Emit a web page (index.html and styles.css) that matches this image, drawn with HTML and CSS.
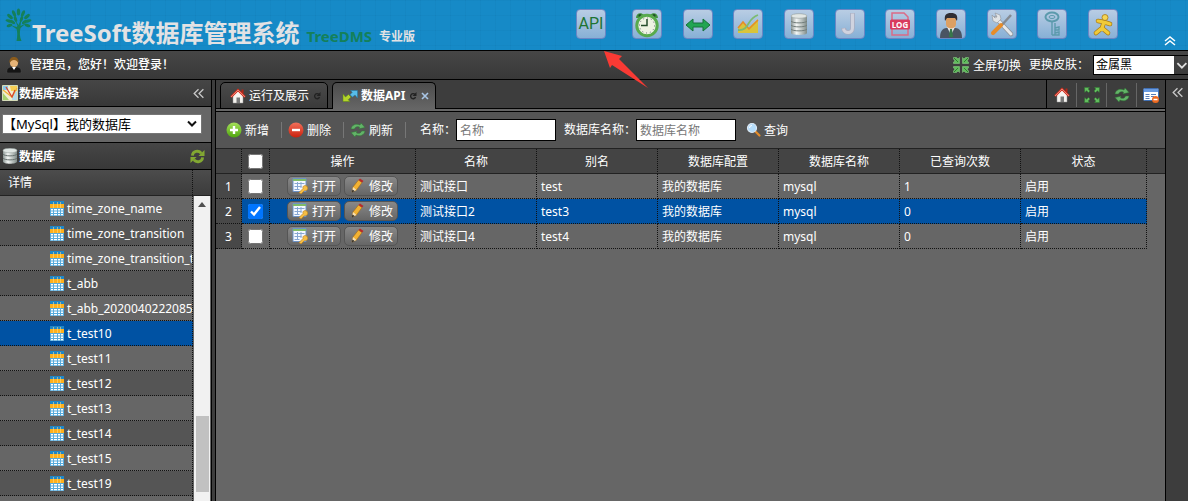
FILE: index.html
```html
<!DOCTYPE html>
<html lang="zh-CN">
<head>
<meta charset="utf-8">
<title>TreeSoft数据库管理系统</title>
<link rel="stylesheet" href="styles.css">
</head>
<body>
<svg class="defs" aria-hidden="true">
  <defs>
    <linearGradient id="metal"><stop offset="0" stop-color="#8b9694"/><stop offset=".35" stop-color="#f4f7f6"/><stop offset="1" stop-color="#7f8b88"/></linearGradient>
    <linearGradient id="green" x2="0" y2="1"><stop offset="0" stop-color="#a6e05a"/><stop offset="1" stop-color="#4fa50e"/></linearGradient>
    <linearGradient id="red" x2="0" y2="1"><stop offset="0" stop-color="#f2705a"/><stop offset="1" stop-color="#c9200d"/></linearGradient>
  </defs>
  <symbol id="i-tree" viewBox="0 0 26 34"><path fill="#14805a" d="M11 33c1-5 1-9 0-12L5 17l6 2 1-1-3-7 4 6 3-7-1 8 6-3-6 5c-1 4-1 9 1 13z"/><g fill="#14805a"><ellipse cx="13" cy="4" rx="1.7" ry="3.6"/><ellipse cx="8.500" cy="5.500" rx="1.600" ry="3.500" transform="rotate(-22 8.500 5.500)"/><ellipse cx="17.500" cy="5.500" rx="1.600" ry="3.500" transform="rotate(22 17.500 5.500)"/><ellipse cx="4.500" cy="8.500" rx="1.600" ry="3.500" transform="rotate(-48 4.500 8.500)"/><ellipse cx="21.500" cy="8.500" rx="1.600" ry="3.500" transform="rotate(48 21.500 8.500)"/><ellipse cx="3.500" cy="13" rx="1.500" ry="3.500" transform="rotate(-75 3.500 13)"/><ellipse cx="22.500" cy="13" rx="1.500" ry="3.500" transform="rotate(75 22.500 13)"/><ellipse cx="4" cy="17.500" rx="1.500" ry="3" transform="rotate(-105 4 17.500)"/><ellipse cx="22" cy="17.500" rx="1.500" ry="3" transform="rotate(105 22 17.500)"/><ellipse cx="10" cy="11" rx="1.500" ry="3" transform="rotate(-20 10 11)"/><ellipse cx="16" cy="11" rx="1.500" ry="3" transform="rotate(20 16 11)"/><ellipse cx="7" cy="14" rx="1.400" ry="3" transform="rotate(-55 7 14)"/><ellipse cx="19" cy="14" rx="1.400" ry="3" transform="rotate(55 19 14)"/></g></symbol>
  <symbol id="i-user" viewBox="0 0 16 16"><path d="M1 16c-1-5 2-6 5-6h4c3 0 6 1 5 6z" fill="#151515" stroke="#555" stroke-width=".5"/><path d="M6 10l2 3 2-3z" fill="#fff"/><circle cx="8" cy="6" r="4" fill="#e5b377"/><path d="M3.500 6C3 1 6 0 8 0s5 1 4.500 6C11 4 10 3 8 3S5 4 3.500 6" fill="#8a5b1c"/></symbol>
  <symbol id="i-arrows" viewBox="0 0 16 16"><g fill="#62bd5e" stroke="#2f7a30" stroke-width=".5"><path id="ar" d="M.5.5h5L4.200 2 6 4 4.500 5.500 2.500 3.800.8 5.400z"/><use href="#ar" transform="matrix(-1 0 0 1 16 0)"/><use href="#ar" transform="matrix(1 0 0 -1 0 16)"/><use href="#ar" transform="matrix(-1 0 0 -1 16 16)"/></g></symbol>
  <symbol id="i-compress" viewBox="0 0 16 16"><g fill="#62bd5e" stroke="#8fd08a" stroke-width=".5"><path id="ac" d="M6.500 6.500h-6V5L2 4 .5 2V.5h3L5 2l1.500-1.500z"/><use href="#ac" transform="matrix(-1 0 0 1 16 0)"/><use href="#ac" transform="matrix(1 0 0 -1 0 16)"/><use href="#ac" transform="matrix(-1 0 0 -1 16 16)"/></g><path d="M1 1l4 4M15 1l-4 4M1 15l4-4M15 15l-4-4" stroke="#2f7a30"/></symbol>
  <symbol id="i-home" viewBox="0 0 16 16"><path d="M11.500 1.500h2v4h-2z" fill="#b02418"/><path d="M3 8l5-5 5 5v7H3z" fill="#f5f3ef" stroke="#999" stroke-width=".5"/><path d="M6.500 9.500h3.500V15H6.500z" fill="#777"/><path d="M1 9l7-7 7 7" fill="none" stroke="#d8301e" stroke-width="2.200"/><path d="M1 9l7-7 7 7" fill="none" stroke="#fff" stroke-width=".4"/></symbol>
  <symbol id="i-refresh" viewBox="0 0 16 16"><g fill="#63b368" stroke="#2c7432" stroke-width=".5"><path d="M1 7c.5-4 5-6 9-4l1-2 4 4.500-6 1.300.5-1.700C7 4 5 5 4.500 7z"/><path d="M15 9c-.5 4-5 6-9 4l-1 2-4-4.500 6-1.300-.5 1.700C9 12 11 11 11.500 9z"/></g></symbol>
  <symbol id="i-sync" viewBox="0 0 16 16"><g fill="none" stroke="#82a832" stroke-width="3"><path d="M2.500 7C3 2 9 1 12 4.500M13.500 9c-.5 5-6.500 6-9.500 2.500"/></g><path d="M15.500 1v6.500H9zM.5 15V8.500H7z" fill="#82a832"/></symbol>
  <symbol id="i-window" viewBox="0 0 16 16"><rect x=".5" y="1.500" width="15" height="12" rx="1" fill="#fff" stroke="#3f6fb4"/><path d="M1 2h14v3H1z" fill="#6a9be0"/><path d="M2.500 7.500h4M2.500 9.500h4M2.500 11.500h4M8 7.500h5M8 9.500h3" stroke="#5a7eb8"/><circle cx="12.500" cy="12.500" r="3.500" fill="#ef6a20"/><path d="M10.500 12.500h4" stroke="#fff" stroke-width="1.500"/></symbol>
  <symbol id="i-map" viewBox="0 0 16 16"><path d="M.5.5h15v15H.5z" fill="#f1edcf" stroke="#d5dcb8"/><path d="M1 1h5v4H1z" fill="#8ac7e9"/><path d="M8 1h7v5H9z" fill="#f6cf55"/><path d="M1 8l6 7H1z" fill="#a6d06b"/><path d="M10 9l5-3v9h-5z" fill="#b5d8e8"/><path d="M1 5l9 7 5-9" fill="none" stroke="#f2b334" stroke-width="1.200"/><path d="M4 2l6 10 3-7" fill="none" stroke="#d9402a" stroke-width="1.200"/></symbol>
  <symbol id="i-db" viewBox="0 0 14 16"><path d="M0 2.500v11c0 3 14 3 14 0v-11z" fill="url(#metal)"/><ellipse cx="7" cy="2.500" rx="7" ry="2.300" fill="#dfe6e4" stroke="#909b98" stroke-width=".5"/><path d="M0 6c1 2.500 13 2.500 14 0M0 10c1 2.500 13 2.500 14 0" fill="none" stroke="#66716f"/></symbol>
  <symbol id="i-table" viewBox="0 0 14 15"><path d="M0 0h14v15H0z" fill="#58abdc"/><path d="M0 0h14v3H0z" fill="#1e86c8"/><path d="M0 3h14v4H0z" fill="#ffb01c"/><path d="M1 8h2v1.500H1zm3 0h3v1.500H4zm4 0h2v1.500H8zm3 0h2v1.500h-2zM1 10.500h2V12H1zm3 0h3V12H4zm4 0h2V12H8zm3 0h2V12h-2zM1 13h2v1.200H1zm3 0h3v1.200H4zm4 0h2v1.200H8zm3 0h2v1.200h-2z" fill="#fff"/><path d="M3.500 1v6M7.500 1v6M10.500 1v6" stroke="#ffdf87" stroke-width=".6"/></symbol>
  <symbol id="i-link" viewBox="0 0 16 12"><path d="M1 4v7.500h7L6.200 9.700 9 7 6.500 4.500 3.500 7z" fill="#b4d42a" stroke="#5f8a13" stroke-width=".5"/><path d="M15.500 8V.5h-7l1.800 1.800L8 4.800 10.500 7 13 5z" fill="#58bce8" stroke="#1c78a8" stroke-width=".5"/></symbol>
  <symbol id="i-add" viewBox="0 0 16 16"><circle cx="8" cy="8" r="7.500" fill="url(#green)"/><path d="M8 4v8M4 8h8" stroke="#fff" stroke-width="2.400"/></symbol>
  <symbol id="i-remove" viewBox="0 0 16 16"><circle cx="8" cy="8" r="7.500" fill="url(#red)"/><path d="M4 8h8" stroke="#fff" stroke-width="2.400"/></symbol>
  <symbol id="i-search" viewBox="0 0 16 16"><path d="M9 9l4.500 4.500" stroke="#e38b2a" stroke-width="2.200" stroke-linecap="round"/><circle cx="6" cy="6" r="4.500" fill="#b4dcfa" stroke="#dce9f5" stroke-width="1.200"/><path d="M3.500 6A2.500 2.500 0 0 1 6 3.500" stroke="#fff" fill="none"/></symbol>
  <symbol id="i-open" viewBox="0 0 16 16"><path d="M1 .5h13v13H1z" fill="#f4f8ff" stroke="#6d92c6"/><path d="M1 1h13v2H1z" fill="#7fbb68"/><path d="M2.500 5.500h10M2.500 8.500h7M2.500 11.500h5M5.500 4v8M9 4v6" stroke="#86a6d3"/><path d="M7 14.500l4-4c-1-3 3-4 4.500-1.500 1 2.500-1 4-3 3.500L9 16z" fill="#f5bd45" stroke="#b77b17" stroke-width=".6"/></symbol>
  <symbol id="i-edit" viewBox="0 0 16 16"><path d="M3 14l1-5 5.500-7 3.500 2.500L7.500 12z" fill="#f2b233" stroke="#a66b12" stroke-width=".6"/><path d="M9.500 2L11 .4l3.500 2.500L13 4.500z" fill="#b82a2a"/><path d="M3 14l1-5 3.500 3z" fill="#f5dfb5"/><path d="M3 14.500l.4-3L5.500 13z" fill="#222"/></symbol>
</svg>

<header class="banner">
  <div class="brand">
    <svg class="tree"><use href="#i-tree"/></svg>
    <h1 class="title">TreeSoft数据库管理系统</h1>
    <span class="product">TreeDMS</span>
    <span class="edition">专业版</span>
  </div>
  <nav class="apps">
    <button class="app api" type="button">API<svg class="pointer" viewBox="0 0 44 38" aria-hidden="true"><path d="M0 0l18 5-3 3 29 29-36-23-2 3z" fill="#f93a34"/></svg></button>
    <div class="app-list">
      <button class="app" type="button" aria-label="定时任务"><svg viewBox="0 0 28 28"><path d="M3 8c0-5 5-6 8-3h6c3-3 8-2 8 3" fill="#3f9440"/><circle cx="7" cy="5.500" r="1.500" fill="#234d26"/><circle cx="21" cy="5.500" r="1.500" fill="#234d26"/><circle cx="14" cy="15.500" r="10.200" fill="#edf3e2" stroke="#58aa4d" stroke-width="3"/><circle cx="14" cy="15.500" r="7.500" fill="none" stroke="#667" stroke-dasharray="1 2.900"/><path d="M14 9v6.500H8" fill="none" stroke="#234b2a" stroke-width="1.500"/></svg></button>
      <button class="app" type="button" aria-label="数据同步"><svg viewBox="0 0 28 28"><path d="M2 15l7-6v4h10V9l7 6-7 6v-4H9v4z" fill="#22a552" stroke="#16733c"/></svg></button>
      <button class="app" type="button" aria-label="统计图表"><svg viewBox="0 0 28 28"><path d="M4 23v-4l5-7 5 6 10-9v14z" fill="#d9c43a"/><path d="M4 18l5-6 6 7 9-9" fill="none" stroke="#e58c28" stroke-width="1.500"/><path d="M4 20c12 1 8-11 20-15" fill="none" stroke="#7dbb70" stroke-width="1.800"/></svg></button>
      <button class="app" type="button" aria-label="数据源"><svg viewBox="0 0 28 28"><path d="M6 6v17c0 2.500 16 2.500 16 0V6z" fill="url(#metal)"/><ellipse cx="14" cy="6" rx="8" ry="2.300" fill="#e2e7e4" stroke="#909b98" stroke-width=".6"/><path d="M6 11c1 2.500 15 2.500 16 0M6 15c1 2.500 15 2.500 16 0M6 19c1 2.500 15 2.500 16 0" fill="none" stroke="#737e7c"/></svg></button>
      <button class="app" type="button" aria-label="JSON"><svg viewBox="0 0 28 28"><path d="M16.500 3v15c0 6-8.500 6-9 0" fill="none" stroke="#a9adc0" stroke-width="4.500"/><path d="M16.500 3.500V18c0 6-8.500 6-9 .5" fill="none" stroke="#d0d3df" stroke-width="3"/></svg></button>
      <button class="app" type="button" aria-label="日志"><svg viewBox="0 0 28 28"><path d="M6 10V3h12l4 4v3M6 19v6h16v-6" fill="none" stroke="#db6b87" stroke-width="1.500"/><rect x="4" y="9.500" width="20" height="10" rx="1.500" fill="#d93a5e"/><text x="14" y="17.500" text-anchor="middle" class="log-text">LOG</text></svg></button>
      <button class="app" type="button" aria-label="用户"><svg viewBox="0 0 28 28"><path d="M3 28c0-9 4-10 8-10h6c4 0 8 1 8 10z" fill="#4a5463"/><path d="M10 17l4 8 4-8z" fill="#e9edf2"/><path d="M13 19h2l1 8h-4z" fill="#38774a"/><path d="M9 8h10v6c0 6-10 6-10 0z" fill="#dca064"/><path d="M8 11c-1-6 1-8 6-8s7 2 6 8l-2-3h-8z" fill="#302f34"/></svg></button>
      <button class="app" type="button" aria-label="设置"><svg viewBox="0 0 28 28"><path d="M8 8l15 16" stroke="#8d9299" stroke-width="4.500" stroke-linecap="round"/><path d="M8 8l15 16" stroke="#e6e9eb" stroke-width="3" stroke-linecap="round"/><path d="M4 5l1 6 4 2 4-4-1-4-5-2 2 4-2 1z" fill="#e1e4e6" stroke="#8d9299" stroke-width=".6"/><path d="M23 5L13 16" stroke="#858b92" stroke-width="2.500"/><path d="M13 15l-8 8" stroke="#e78c28" stroke-width="4" stroke-linecap="round"/></svg></button>
      <button class="app" type="button" aria-label="密码"><svg viewBox="0 0 28 28"><g fill="none" stroke="#5b9aac"><ellipse cx="14" cy="7" rx="6.500" ry="4.500" stroke-width="2"/><ellipse cx="14" cy="7" rx="3" ry="1.500"/><path d="M14 12v13M17 13v12M14 25h3M17 18l4-1v3h-4M17 23l4-1v3h-4" stroke-width="1.400"/></g></svg></button>
      <button class="app" type="button" aria-label="退出"><svg viewBox="0 0 28 28"><g fill="none" stroke="#a87a16" stroke-width="4.600" stroke-linecap="round" stroke-linejoin="round"><path d="M9 11l6 1 6 2M15 12l-2 6 6 5M13 18l-6 5"/></g><path d="M9 11l6 1 6 2M15 12l-2 6 6 5M13 18l-6 5" fill="none" stroke="#f0ca38" stroke-width="3.200" stroke-linecap="round" stroke-linejoin="round"/><circle cx="16" cy="7.500" r="3" fill="#f5d653" stroke="#a87a16" stroke-width=".8"/></svg></button>
    </div>
  </nav>
  <button class="icon-button fold" type="button" aria-label="折叠"><svg viewBox="0 0 12 10"><path d="M1 5l5-4 5 4M1 9l5-4 5 4" fill="none" stroke="#fff" stroke-width="1.500"/></svg></button>
</header>

<div class="userbar">
  <svg class="icon avatar"><use href="#i-user"/></svg>
  <span class="welcome">管理员，您好！欢迎登录！</span>
  <button class="text-button full" type="button"><svg class="icon"><use href="#i-compress"/></svg><span>全屏切换</span></button>
  <label for="skin">更换皮肤：</label>
  <span class="combo"><select id="skin"><option>金属黑</option></select><svg viewBox="0 0 14 20"><path d="M3 8l5 5 5-5" fill="none" stroke="#ddd" stroke-width="2"/></svg></span>
</div>

<div class="workspace">
  <aside class="sidebar">
    <div class="panel-head"><svg class="icon"><use href="#i-map"/></svg><h2>数据库选择</h2><button class="icon-button" type="button" aria-label="收起"><svg viewBox="0 0 12 12"><path d="M6 2L2 6l4 4M10.500 2l-4 4 4 4" fill="none" stroke="#c8c8c8" stroke-width="1.200"/></svg></button></div>
    <div class="db-pick"><select class="db-select" aria-label="数据库选择"><option>【MySql】我的数据库</option></select><svg viewBox="0 0 10 8"><path d="M1 1.500l4 4 4-4" fill="none" stroke="#111" stroke-width="2"/></svg></div>
    <div class="panel-head"><svg class="icon"><use href="#i-db"/></svg><h2>数据库</h2><button class="icon-button sync" type="button" aria-label="刷新数据库"><svg><use href="#i-sync"/></svg></button></div>
    <div class="tree-head"><span>详情</span></div>
    <div class="tree-body">
      <ul class="tables">
        <li><svg><use href="#i-table"/></svg><span>time_zone_name</span></li>
        <li><svg><use href="#i-table"/></svg><span>time_zone_transition</span></li>
        <li><svg><use href="#i-table"/></svg><span>time_zone_transition_type</span></li>
        <li><svg><use href="#i-table"/></svg><span>t_abb</span></li>
        <li><svg><use href="#i-table"/></svg><span>t_abb_20200402220855</span></li>
        <li class="selected"><svg><use href="#i-table"/></svg><span>t_test10</span></li>
        <li><svg><use href="#i-table"/></svg><span>t_test11</span></li>
        <li><svg><use href="#i-table"/></svg><span>t_test12</span></li>
        <li><svg><use href="#i-table"/></svg><span>t_test13</span></li>
        <li><svg><use href="#i-table"/></svg><span>t_test14</span></li>
        <li><svg><use href="#i-table"/></svg><span>t_test15</span></li>
        <li><svg><use href="#i-table"/></svg><span>t_test19</span></li>
        <li></li>
      </ul>
      <div class="scrollbar"><svg viewBox="0 0 8 5"><path d="M0 5l4-5 4 5z" fill="#505050"/></svg><div class="thumb"></div></div>
    </div>
  </aside>

  <main class="content">
    <div class="tabbar">
      <div class="tabs">
        <button class="tab" type="button"><svg class="icon"><use href="#i-home"/></svg>运行及展示<svg class="mini" viewBox="0 0 8 8"><path d="M6 2.500A2.500 2.500 0 1 0 6.500 5" fill="none" stroke="#222" stroke-width="1.400"/><path d="M7.500 0v4h-4z" fill="#222"/></svg></button>
        <button class="tab active" type="button"><svg class="icon"><use href="#i-link"/></svg>数据API<svg class="mini" viewBox="0 0 8 8"><path d="M6 2.500A2.500 2.500 0 1 0 6.500 5" fill="none" stroke="#222" stroke-width="1.400"/><path d="M7.500 0v4h-4z" fill="#222"/></svg><svg class="mini" viewBox="0 0 8 8"><path d="M1 1l6 6M7 1L1 7" stroke="#a9c6e6" stroke-width="1.600"/></svg></button>
      </div>
      <div class="tab-tools">
        <button class="icon-button" type="button" aria-label="首页"><svg><use href="#i-home"/></svg></button>
        <button class="icon-button" type="button" aria-label="全屏"><svg><use href="#i-arrows"/></svg></button>
        <button class="icon-button" type="button" aria-label="刷新"><svg><use href="#i-refresh"/></svg></button>
        <button class="icon-button" type="button" aria-label="关闭标签"><svg><use href="#i-window"/></svg></button>
      </div>
    </div>
    <div class="toolbar">
      <button class="text-button" type="button"><svg class="icon"><use href="#i-add"/></svg><span>新增</span></button>
      <i class="sep"></i>
      <button class="text-button" type="button"><svg class="icon"><use href="#i-remove"/></svg><span>删除</span></button>
      <i class="sep"></i>
      <button class="text-button" type="button"><svg class="icon"><use href="#i-refresh"/></svg><span>刷新</span></button>
      <i class="sep"></i>
      <label for="name">名称：</label><input id="name" type="text" placeholder="名称">
      <label for="dbname">数据库名称：</label><input id="dbname" type="text" placeholder="数据库名称">
      <button class="text-button query" type="button"><svg class="icon"><use href="#i-search"/></svg><span>查询</span></button>
    </div>
    <div class="grid">
      <table>
        <colgroup><col class="c-num"><col class="c-check"><col class="c-op"><col class="c-data"><col class="c-data"><col class="c-data"><col class="c-data"><col class="c-data"><col class="c-state"><col></colgroup>
        <thead><tr><th></th><th class="check"><input type="checkbox" aria-label="全选"></th><th>操作</th><th>名称</th><th>别名</th><th>数据库配置</th><th>数据库名称</th><th>已查询次数</th><th>状态</th><th class="rest"></th></tr></thead>
        <tbody>
          <tr><td class="num">1</td><td class="check"><input type="checkbox" aria-label="选择第1行"></td><td class="ops"><div><button type="button"><svg class="icon"><use href="#i-open"/></svg><span>打开</span></button><button type="button"><svg class="icon"><use href="#i-edit"/></svg><span>修改</span></button></div></td><td>测试接口</td><td>test</td><td>我的数据库</td><td>mysql</td><td>1</td><td>启用</td><td class="rest"></td></tr>
          <tr class="selected"><td class="num">2</td><td class="check"><input type="checkbox" checked aria-label="选择第2行"></td><td class="ops"><div><button type="button"><svg class="icon"><use href="#i-open"/></svg><span>打开</span></button><button type="button"><svg class="icon"><use href="#i-edit"/></svg><span>修改</span></button></div></td><td>测试接口2</td><td>test3</td><td>我的数据库</td><td>mysql</td><td>0</td><td>启用</td><td class="rest"></td></tr>
          <tr><td class="num">3</td><td class="check"><input type="checkbox" aria-label="选择第3行"></td><td class="ops"><div><button type="button"><svg class="icon"><use href="#i-open"/></svg><span>打开</span></button><button type="button"><svg class="icon"><use href="#i-edit"/></svg><span>修改</span></button></div></td><td>测试接口4</td><td>test4</td><td>我的数据库</td><td>mysql</td><td>0</td><td>启用</td><td class="rest"></td></tr>
        </tbody>
      </table>
    </div>
  </main>

  <aside class="rail"><button class="icon-button" type="button" aria-label="展开"><svg viewBox="0 0 12 12"><path d="M6 2L2 6l4 4M10.500 2l-4 4 4 4" fill="none" stroke="#c8c8c8" stroke-width="1.200"/></svg></button></aside>
</div>
</body>
</html>
```

FILE: styles.css
```css
* { box-sizing: border-box; }

body {
  margin: 0;
  height: 100vh;
  overflow: hidden;
  display: flex;
  flex-direction: column;
  background: #3d3d3d;
  color: #fff;
  font: 12px/18px "Noto Sans", "Noto Sans CJK SC", sans-serif;
}

button, input, select { font: inherit; color: inherit; margin: 0; }
button { padding: 0; border: 0; background: none; }
h1, h2, ul { margin: 0; padding: 0; }
svg { display: block; flex: none; }
.defs { position: absolute; width: 0; height: 0; }
.icon { width: 16px; height: 16px; }

.icon-button { display: flex; align-items: center; justify-content: center; }
.icon-button svg { width: 16px; height: 16px; }
.text-button { display: flex; align-items: center; gap: 3px; white-space: nowrap; }
.text-button span { padding-top: 2px; }

/* Banner */
.banner {
  flex: none;
  height: 51px;
  display: flex;
  border-bottom: 1px solid #000;
  background-color: #168ac7;
  background-image:
    linear-gradient(rgba(0, 50, 100, .04) 1px, transparent 1px),
    linear-gradient(90deg, rgba(0, 50, 100, .04) 1px, transparent 1px);
  background-size: 15px 15px;
}
.brand { display: flex; align-items: flex-end; padding: 0 0 4px 5px; white-space: nowrap; }
.tree { width: 27px; height: 34px; align-self: flex-start; margin-top: 8px; }
.title { font-size: 24px; line-height: 26px; font-weight: 700; color: #e2e2e4; }
.product { margin-left: 7px; font-size: 15px; line-height: 20px; font-weight: 700; color: #14805a; }
.edition { margin-left: 7px; font-weight: 700; color: #e2e2e4; }
.apps { margin-left: auto; display: flex; gap: 26px; padding: 9px 46px 0 0; }
.app-list { width: 486px; display: flex; justify-content: space-between; }
.app {
  width: 30px;
  height: 30px;
  border: 1px solid #6b86c4;
  border-radius: 4px;
  background: linear-gradient(#b9cde4, #87b0d6);
}
.app svg { width: 28px; height: 28px; }
.api { position: relative; font-family: Roboto, sans-serif; font-size: 16px; color: #1e7432; }
.app .pointer { position: absolute; left: 27px; top: 41px; width: 44px; height: 38px; z-index: 2; }
.log-text { font: 700 8px "Noto Sans", sans-serif; fill: #fff; }
.fold { align-self: flex-end; margin: 0 12px 3px 0; }
.fold svg { width: 12px; height: 12px; }

/* User bar */
.userbar {
  flex: none;
  height: 29px;
  display: flex;
  align-items: center;
  padding-left: 6px;
  border-bottom: 1px solid #000;
  background: linear-gradient(#464646, #383838);
}
.welcome { margin-left: 8px; font-weight: 500; }
.full { margin-left: auto; gap: 4px; }
.userbar label { margin-left: 8px; }
.combo { display: flex; margin-left: 4px; height: 20px; border: 1px solid #000; border-right: 0; }
.combo select { width: 80px; padding: 0 2px; border: 0; border-radius: 0; appearance: none; background: #fff; color: #000; }
.combo svg { width: 14px; height: 18px; }

/* Sidebar */
.workspace { flex: 1; min-height: 0; display: flex; }
.sidebar { width: 212px; flex: none; display: flex; flex-direction: column; border-right: 1px solid #000; background: #666; }
.panel-head {
  flex: none;
  height: 27px;
  display: flex;
  align-items: center;
  padding: 0 6px 0 2px;
  border-bottom: 1px solid #000;
  background: linear-gradient(#464646, #383838);
}
.panel-head h2 { flex: 1; margin-left: 1px; padding-top: 2px; font-size: 12px; line-height: 18px; }
.panel-head .icon-button svg { width: 13px; height: 13px; }
.panel-head .sync svg { width: 15px; height: 15px; }
.db-pick { flex: none; height: 36px; position: relative; padding: 7px 9px 0 2px; border-bottom: 1px solid #000; }
.db-select { width: 100%; height: 20px; padding: 0; border: 1px solid #767676; border-radius: 0; appearance: none; background: #fff; color: #000; font-size: 13px; line-height: 18px; }
.db-pick svg { position: absolute; right: 14px; top: 13px; width: 10px; height: 8px; pointer-events: none; }
.tree-head { flex: none; height: 26px; border-bottom: 1px solid #222; background: linear-gradient(#4c4c4c, #3c3c3c); padding-right: 18px; }
.tree-head span { display: block; height: 25px; padding-left: 8px; line-height: 26px; border-right: 1px dotted #111; }
.tree-body { flex: 1; min-height: 0; display: flex; overflow: hidden; }
.tables { flex: 1; min-width: 0; overflow: hidden; list-style: none; }
.tables li {
  height: 25px;
  display: flex;
  align-items: center;
  gap: 3px;
  overflow: hidden;
  padding-left: 50px;
  border-right: 1px dotted #111;
  border-bottom: 1px dotted #111;
  white-space: nowrap;
}
.tables li:nth-child(even) { background: #555; }
.tables li.selected { background: #0052a3; }
.tables svg { width: 14px; height: 15px; }
.tables span { padding-top: 2px; }
.scrollbar { width: 18px; flex: none; display: flex; flex-direction: column; align-items: center; padding: 6px 0 9px; border-right: 1px solid #666; border-left: 1px solid #666; background: #f1f1f1; }
.scrollbar svg { width: 8px; height: 5px; }
.thumb { width: 13px; height: 76px; margin-top: auto; background: #c1c1c1; }

/* Content */
.content { flex: 1; min-width: 0; display: flex; flex-direction: column; margin-left: 3px; border: 1px solid #000; border-width: 0 1px; background: #666; }
.tabbar { flex: none; height: 32px; display: flex; justify-content: space-between; background: #3d3d3d; border-bottom: 1px solid #000; box-shadow: inset 0 -2px #666, inset 0 -3px #000; }
.tabs { display: flex; align-items: flex-end; gap: 4px; padding: 0 0 2px 4px; }
.tab { height: 27px; display: flex; align-items: center; gap: 3px; padding: 0 6px 0 9px; border: 1px solid #000; border-radius: 5px 5px 0 0; background: linear-gradient(#4a4a4a, #3a3a3a); }
.tab.active { border-bottom: 0; background: linear-gradient(#4c4c4c, #666); font-weight: 700; }
.mini { width: 8px; height: 8px; margin-left: 1px; }
.tab-tools { display: flex; height: 29px; border-left: 1px solid #000; }
.tab-tools .icon-button { width: 30px; height: 24px; margin-top: 3px; border-right: 1px solid #666; }
.tab-tools .icon-button:last-child { width: 28px; border: 0; }

.toolbar { flex: none; height: 37px; display: flex; align-items: center; padding-left: 10px; border-bottom: 1px solid #222; background: #555; }
.sep { width: 1px; height: 16px; margin: 0 6px 0 12px; background: #777; }
.toolbar label { margin-left: 8px; white-space: nowrap; }
.toolbar input { width: 100px; height: 22px; padding: 0 3px; border: 1px solid #000; border-radius: 0; background: #fff; color: #000; }
.toolbar input::placeholder { color: #777; }
.query { margin-left: 10px; gap: 2px; }

.grid { flex: 1; min-height: 0; overflow: hidden; }
table { width: 100%; table-layout: fixed; border-collapse: separate; border-spacing: 0; }
.c-num { width: 26px; }
.c-check { width: 28px; }
.c-op { width: 146px; }
.c-data { width: 121px; }
.c-state { width: 126px; }
th, td { height: 25px; padding: 2px 4px 0; border-right: 1px dotted #111; border-bottom: 1px dotted #111; line-height: 18px; font-weight: 400; text-align: left; white-space: nowrap; }
th { border-bottom: 1px solid #222; text-align: center; background: #444; }
th.rest { border-right: 0; }
td.rest { border: 0; background: #666; }
td.num { padding: 2px 0 0; text-align: center; background: #484848; }
th.check, td.check { padding: 0; }
.check input { display: block; width: 15px; height: 15px; margin: 0 auto; }
tr.selected td { background: #0052a3; }
tr.selected td.num { background: #484848; }
tr.selected td.rest { background: #666; }
td.ops { padding: 0; }
.ops div { display: flex; justify-content: center; gap: 3px; }
.ops button { width: 54px; height: 20px; display: flex; align-items: center; justify-content: center; gap: 4px; border: 1px solid #555; border-radius: 5px; background: linear-gradient(#888, #666); line-height: 18px; }
.ops span { padding-top: 2px; }

.rail { width: 22px; flex: none; background: #3d3d3d; padding: 6px 0 0 5px; }
.rail .icon-button svg { width: 13px; height: 13px; }
```
